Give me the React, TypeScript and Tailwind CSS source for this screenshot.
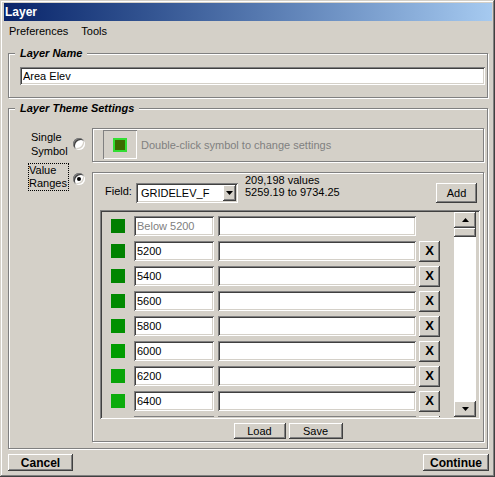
import React from 'react';

const raised = 'shadow-[inset_-1px_-1px_0_#404040,inset_1px_1px_0_#ffffff,inset_-2px_-2px_0_#808080,inset_2px_2px_0_#d4d0c8]';
const sunken = 'shadow-[inset_1px_1px_0_#808080,inset_-1px_-1px_0_#ffffff,inset_2px_2px_0_#404040,inset_-2px_-2px_0_#d4d0c8]';
const etched = 'border border-[#808080] shadow-[inset_1px_1px_0_#ffffff,1px_1px_0_#ffffff]';

// last row sits under the list's bottom edge, only its top line shows
const ranges = [
  { from: 'Below 5200', color: 'bg-[#007f00]', fixed: true },
  { from: '5200', color: 'bg-[#008200]' },
  { from: '5400', color: 'bg-[#008600]' },
  { from: '5600', color: 'bg-[#008a00]' },
  { from: '5800', color: 'bg-[#009000]' },
  { from: '6000', color: 'bg-[#009c00]' },
  { from: '6200', color: 'bg-[#08a408]' },
  { from: '6400', color: 'bg-[#0cac0c]' },
  { from: '', color: 'bg-[#10b010]', hidden: true },
];

const Legend = ({ children }: { children: React.ReactNode }) => (
  <div className="block w-fit -mt-[8px] ml-[6px] px-[5px] h-[14px] leading-[14px] bg-[#d4d0c8] text-[11px] font-bold italic">{children}</div>
);

const Radio = ({ checked, className = '' }: { checked?: boolean; className?: string }) => (
  <div className={`w-[12px] h-[12px] rounded-full bg-white flex items-center justify-center shadow-[inset_1px_1px_0_#808080,inset_-1px_-1px_0_#ffffff,inset_2px_2px_0_#404040,inset_-2px_-2px_0_#d4d0c8] ${className}`}>
    {checked && <div className="w-[4px] h-[4px] rounded-full bg-black" />}
  </div>
);

const Btn = ({ children, className = '' }: { children?: React.ReactNode; className?: string }) => (
  <button className={`flex items-center justify-center bg-[#d4d0c8] text-black ${raised} ${className}`}>{children}</button>
);

const Tri = ({ up }: { up?: boolean }) => (
  <svg width="7" height="4" viewBox="0 0 7 4">
    <path d={up ? 'M3.5 0 L7 4 L0 4 Z' : 'M0 0 L7 0 L3.5 4 Z'} fill="#000" />
  </svg>
);

export default function App() {
  return (
    <div className="w-[495px] h-[477px] bg-[#d4d0c8] pt-[3px] pl-[4px] pr-[3px] flex flex-col text-[11px] text-black shadow-[inset_-1px_-1px_0_#404040,inset_1px_1px_0_#d4d0c8,inset_-2px_-2px_0_#808080,inset_2px_2px_0_#ffffff]" style={{ fontFamily: '"Liberation Sans", Arial, sans-serif' }}>
      <div className="h-[18px] bg-gradient-to-r from-[#0a246a] to-[#a6caf0] flex items-center pl-[1px] text-white font-bold text-[12px]">Layer</div>

      <div className="h-[20px] flex items-center gap-[3px]">
        <span className="px-[5px]">Preferences</span>
        <span className="px-[5px]">Tools</span>
      </div>

      <div className={`mx-[4px] mt-[12px] h-[45px] ${etched}`}>
        <Legend>Layer Name</Legend>
        <input readOnly value="Area Elev" className={`block ml-[11px] mt-[7px] w-[465px] h-[18px] bg-white pl-[3px] text-[11px] outline-none ${sunken}`} />
      </div>

      <div className={`mx-[4px] mt-[10px] h-[341px] flex flex-col ${etched}`}>
        <Legend>Layer Theme Settings</Legend>

        <div className="flex mt-[13px] h-[34px]">
          <div className="w-[64px] pl-[22px] pt-[2px] leading-[14px]">Single<br />Symbol</div>
          <Radio className="mt-[10px]" />
          <div className={`ml-[7px] mr-[3px] flex-1 h-[34px] flex items-start ${etched}`}>
            <div className="ml-[10px] mt-[1px] w-[34px] h-[29px] flex items-center justify-center shadow-[inset_1px_1px_0_#808080,inset_-1px_-1px_0_#ffffff]">
              <div className="w-[14px] h-[14px] border-2 border-[#33dd33] bg-[#3c6a00]" />
            </div>
            <span className="ml-[4px] self-center text-[#808080]">Double-click symbol to change settings</span>
          </div>
        </div>

        <div className="flex">
          <div className="w-[64px] pl-[19px] pt-[1px]">
            <div className="w-[41px] h-[28px] border border-dotted border-black leading-[13px]">Value<br />Ranges</div>
          </div>
          <Radio checked className="mt-[11px]" />
          <div className={`ml-[7px] mr-[3px] mt-[10px] flex-1 h-[270px] flex flex-col ${etched}`}>
            <div className="flex items-start h-[37px]">
              <span className="ml-[12px] mt-[12px] leading-[13px]">Field:</span>
              <div className={`ml-[4px] mt-[10px] w-[102px] h-[20px] bg-white flex p-[2px] ${sunken}`}>
                <span className="flex-1 pl-[3px] leading-[16px]">GRIDELEV_F</span>
                <Btn className="w-[13px] h-[16px]"><Tri /></Btn>
              </div>
              <div className="ml-[7px] mt-[1px] leading-[12px]">209,198 values<br />5259.19 to 9734.25</div>
              <Btn className="ml-auto mr-[6px] mt-[10px] w-[41px] h-[20px]">Add</Btn>
            </div>

            <div className={`ml-[7px] w-[380px] h-[209px] flex p-[2px] ${sunken}`}>
              <div className="flex-1 overflow-hidden pt-[4px] pl-[9px]">
                {ranges.map((r, i) => (
                  <div key={i} className="flex items-center h-[20px] mb-[5px]">
                    <div className={`w-[14px] h-[14px] ${r.color}`} />
                    <input readOnly value={r.from} className={`ml-[9px] w-[80px] h-[20px] pl-[3px] bg-white text-[11px] outline-none ${r.fixed ? 'text-[#808080]' : 'text-black'} ${sunken}`} />
                    <input readOnly value="" className={`ml-[4px] w-[198px] h-[20px] bg-white outline-none ${sunken}`} />
                    {!r.fixed && <Btn className="ml-[3px] w-[21px] h-[21px] text-[13px] font-bold">{r.hidden ? null : 'X'}</Btn>}
                  </div>
                ))}
              </div>
              <div className="w-[22px] mr-[2px] flex flex-col">
                <Btn className="h-[16px] w-full"><Tri up /></Btn>
                <div className={`h-[9px] bg-[#d4d0c8] ${raised}`} />
                <div className="flex-1 bg-white" />
                <Btn className="h-[16px] w-full"><Tri /></Btn>
              </div>
            </div>

            <div className="mt-[4px] flex justify-center gap-[3px]">
              <Btn className="w-[52px] h-[16px]">Load</Btn>
              <Btn className="w-[54px] h-[16px]">Save</Btn>
            </div>
          </div>
        </div>
      </div>

      <div className="mt-[5px] flex justify-between">
        <Btn className="ml-[4px] w-[65px] h-[17px] font-bold text-[12px]">Cancel</Btn>
        <Btn className="mr-[3px] w-[66px] h-[17px] font-bold text-[12px]">Continue</Btn>
      </div>
    </div>
  );
}
